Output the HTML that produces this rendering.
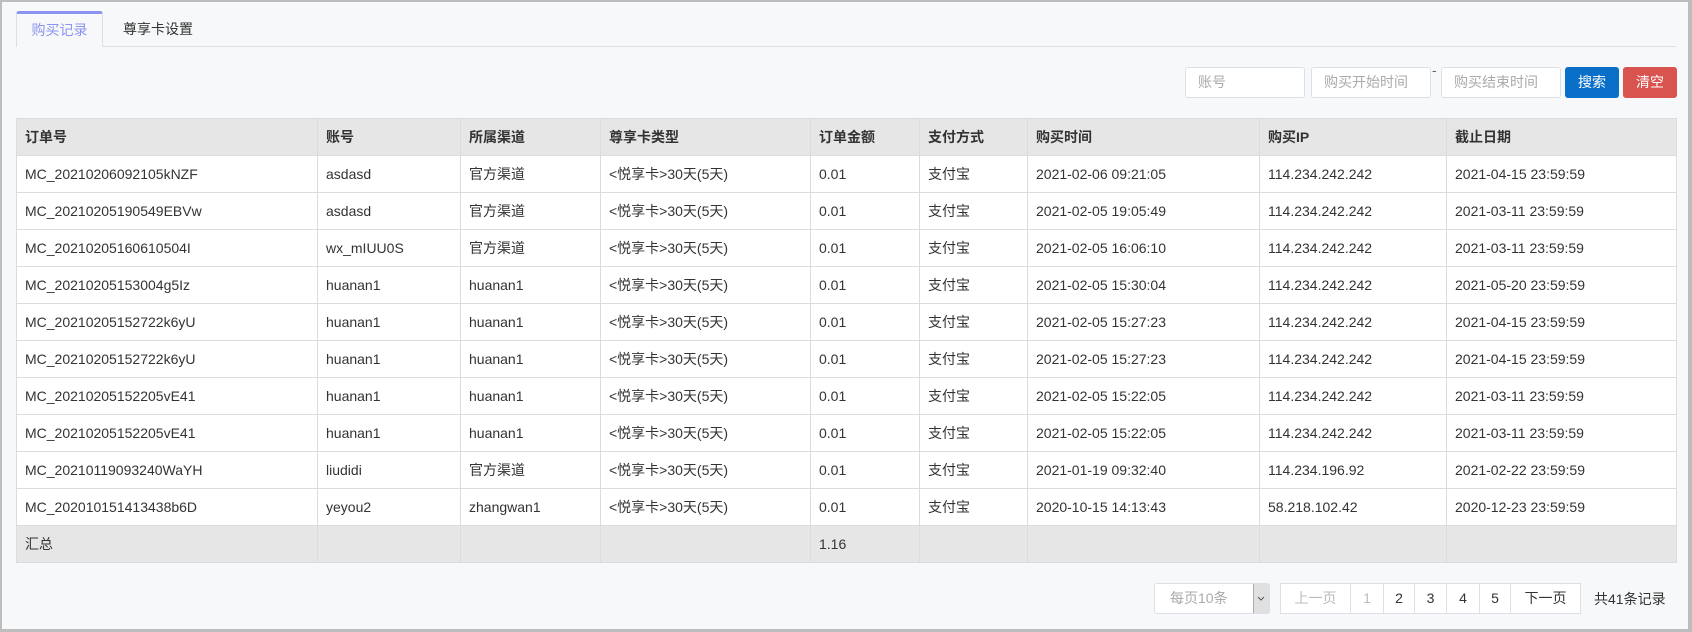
<!DOCTYPE html>
<html><head><meta charset="utf-8"><style>
*{box-sizing:border-box;margin:0;padding:0}
body{width:1692px;height:632px;background:#bdbdbd;font-family:"Liberation Sans","Noto Sans CJK SC",sans-serif;font-size:14px;color:#333;position:relative;overflow:hidden}
.frame{position:absolute;left:2px;top:2px;width:1686px;height:627px;background:#f7f8fa}
.tabline{position:absolute;left:16px;top:46px;width:1660px;height:1px;background:#dcdfe6}
.tab{position:absolute;top:11px;height:36px;line-height:36px;font-size:14px;text-align:center}
.tab.a{left:16px;width:87px;background:#f7f8fa;border:1px solid #dcdfe6;border-top:3px solid #8b93f0;border-bottom:none;border-radius:3px 3px 0 0;color:#8b93f0;line-height:32px}
.tab.b{left:108px;width:100px;color:#333}
.inp{position:absolute;top:67px;height:31px;background:#fff;border:1px solid #dcdfe6;border-radius:3px;color:#aaa;font-size:14px;line-height:29px;padding-left:12px}
.btn{position:absolute;top:67px;height:31px;border-radius:3px;color:#fff;text-align:center;line-height:31px;font-size:14px}
table{position:absolute;left:16px;top:118px;width:1661px;border-collapse:collapse;background:#fff}
td{border:1px solid #dcdcdc;height:37px;padding:0 8px;white-space:nowrap;font-size:14px}
tr.h td{background:#e6e6e6;font-weight:bold;color:#333}
tr.s td{background:#e6e6e6}
.sel{position:absolute;left:1154px;top:583px;width:116px;height:31px;background:#fff;border:1px solid #dcdfe6;border-radius:3px;color:#aaa;line-height:29px;padding-left:15px}
.sel i{position:absolute;right:0;top:0;width:16px;height:29px;background:#e0e0e0;border-left:1px solid #aaa}
.pg{position:absolute;top:583px;height:31px;background:#fff;border:1px solid #dcdfe6;line-height:29px;text-align:center;font-size:14px}
</style></head><body>
<div class="frame"></div>
<div class="tabline"></div>
<div class="tab a">购买记录</div>
<div class="tab b">尊享卡设置</div>
<div class="inp" style="left:1185px;width:120px">账号</div>
<div class="inp" style="left:1311px;width:120px">购买开始时间</div>
<div style="position:absolute;left:1432px;top:62px;color:#666">-</div>
<div class="inp" style="left:1441px;width:120px">购买结束时间</div>
<div class="btn" style="left:1565px;width:54px;background:#0a6fc8">搜索</div>
<div class="btn" style="left:1623px;width:54px;background:#d9534f">清空</div>
<table>
<colgroup><col style="width:301px"><col style="width:143px"><col style="width:140px"><col style="width:210px"><col style="width:109px"><col style="width:108px"><col style="width:232px"><col style="width:187px"><col></colgroup>
<tr class="h"><td>订单号</td><td>账号</td><td>所属渠道</td><td>尊享卡类型</td><td>订单金额</td><td>支付方式</td><td>购买时间</td><td>购买IP</td><td>截止日期</td></tr>
<tr><td>MC_20210206092105kNZF</td><td>asdasd</td><td>官方渠道</td><td>&lt;悦享卡&gt;30天(5天)</td><td>0.01</td><td>支付宝</td><td>2021-02-06 09:21:05</td><td>114.234.242.242</td><td>2021-04-15 23:59:59</td></tr>
<tr><td>MC_20210205190549EBVw</td><td>asdasd</td><td>官方渠道</td><td>&lt;悦享卡&gt;30天(5天)</td><td>0.01</td><td>支付宝</td><td>2021-02-05 19:05:49</td><td>114.234.242.242</td><td>2021-03-11 23:59:59</td></tr>
<tr><td>MC_20210205160610504I</td><td>wx_mIUU0S</td><td>官方渠道</td><td>&lt;悦享卡&gt;30天(5天)</td><td>0.01</td><td>支付宝</td><td>2021-02-05 16:06:10</td><td>114.234.242.242</td><td>2021-03-11 23:59:59</td></tr>
<tr><td>MC_20210205153004g5Iz</td><td>huanan1</td><td>huanan1</td><td>&lt;悦享卡&gt;30天(5天)</td><td>0.01</td><td>支付宝</td><td>2021-02-05 15:30:04</td><td>114.234.242.242</td><td>2021-05-20 23:59:59</td></tr>
<tr><td>MC_20210205152722k6yU</td><td>huanan1</td><td>huanan1</td><td>&lt;悦享卡&gt;30天(5天)</td><td>0.01</td><td>支付宝</td><td>2021-02-05 15:27:23</td><td>114.234.242.242</td><td>2021-04-15 23:59:59</td></tr>
<tr><td>MC_20210205152722k6yU</td><td>huanan1</td><td>huanan1</td><td>&lt;悦享卡&gt;30天(5天)</td><td>0.01</td><td>支付宝</td><td>2021-02-05 15:27:23</td><td>114.234.242.242</td><td>2021-04-15 23:59:59</td></tr>
<tr><td>MC_20210205152205vE41</td><td>huanan1</td><td>huanan1</td><td>&lt;悦享卡&gt;30天(5天)</td><td>0.01</td><td>支付宝</td><td>2021-02-05 15:22:05</td><td>114.234.242.242</td><td>2021-03-11 23:59:59</td></tr>
<tr><td>MC_20210205152205vE41</td><td>huanan1</td><td>huanan1</td><td>&lt;悦享卡&gt;30天(5天)</td><td>0.01</td><td>支付宝</td><td>2021-02-05 15:22:05</td><td>114.234.242.242</td><td>2021-03-11 23:59:59</td></tr>
<tr><td>MC_20210119093240WaYH</td><td>liudidi</td><td>官方渠道</td><td>&lt;悦享卡&gt;30天(5天)</td><td>0.01</td><td>支付宝</td><td>2021-01-19 09:32:40</td><td>114.234.196.92</td><td>2021-02-22 23:59:59</td></tr>
<tr><td>MC_202010151413438b6D</td><td>yeyou2</td><td>zhangwan1</td><td>&lt;悦享卡&gt;30天(5天)</td><td>0.01</td><td>支付宝</td><td>2020-10-15 14:13:43</td><td>58.218.102.42</td><td>2020-12-23 23:59:59</td></tr>
<tr class="s"><td>汇总</td><td></td><td></td><td></td><td>1.16</td><td></td><td></td><td></td><td></td></tr>
</table>
<div class="sel">每页10条<i><svg width="14" height="29" viewBox="0 0 14 29"><path d="M4 13l3 3 3-3" stroke="#555" fill="none" stroke-width="1"/></svg></i></div>
<div class="pg" style="left:1280px;width:71px;color:#bbb">上一页</div>
<div class="pg" style="left:1350px;width:34px;color:#bbb">1</div>
<div class="pg" style="left:1383px;width:32px">2</div>
<div class="pg" style="left:1414px;width:33px">3</div>
<div class="pg" style="left:1446px;width:34px">4</div>
<div class="pg" style="left:1479px;width:32px">5</div>
<div class="pg" style="left:1510px;width:71px">下一页</div>
<div style="position:absolute;left:1594px;top:589px;font-size:14px">共41条记录</div>
</body></html>
